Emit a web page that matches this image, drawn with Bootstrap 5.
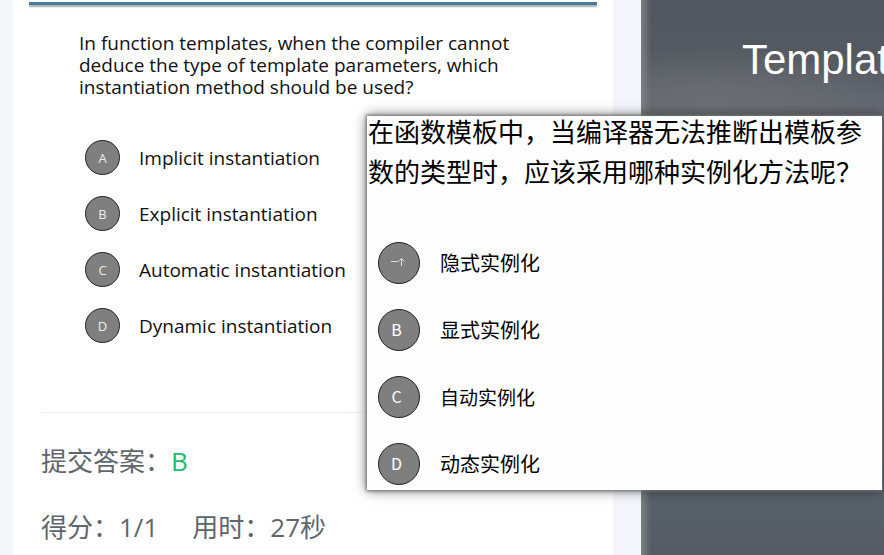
<!DOCTYPE html>
<html lang="zh-CN">
<head>
<meta charset="utf-8">
<meta name="viewport" content="width=device-width, initial-scale=1">
<title>Templates</title>
<link href="https://cdn.jsdelivr.net/npm/bootstrap@5.3.0/dist/css/bootstrap.min.css" rel="stylesheet">
<style>
body { background: #f5f6fb; font-family: "Open Sans", "Noto Sans CJK SC", sans-serif; color: #111; }
.review { flex: 1 1 0; min-width: 0; margin: 0 28px 0 13px; background: #fff; }
.slide-rule { height: 3px; margin: 2px 16px 0; background: #457b9d; box-shadow: 0 2px 2px #aaa; }
.slide-body { padding: 27px 66px 0; }
.question { font-size: 19px; line-height: 22px; max-width: 450px; margin-bottom: 42px; }
.choices { padding-left: 6px; gap: 21px; }
.choice { gap: 19px; font-size: 19px; line-height: 26px; color: #111; }
.choice-letter { width: 35px; height: 35px; font-size: 13px; color: #eee; background: #7f7f7f; border: 1px solid #222; border-radius: 50%; }
.result { margin: 69px 28px 0; padding-top: 28px; border-top: 1px solid #f0f1f4; font-size: 26px; line-height: 40px; color: #5f656d; gap: 26px; }
.result-answer { color: #19be6b; }
.result-row { column-gap: 34px; }
.stage { flex: 0 0 27.5%; min-width: 0; padding: 35px 0 0 101px;
  background: linear-gradient(90deg, #7c8083 0, transparent 10px), radial-gradient(ellipse 180px 75px at 30% 118px, #6d7175, transparent), linear-gradient(#52565e 0, #555a61 60px, #656971 110px, #59626a 490px, #545b65 555px); }
.stage-title { font-family: "Liberation Sans", sans-serif; font-size: 42px; line-height: 50px; color: #fff; }
.translation { top: 116px; left: 367px; right: 2px; background: #fefefe; box-shadow: 0 0 3px 1px #777, 0 0 12px rgba(0,0,0,.6); font-family: "Noto Sans CJK SC", sans-serif; color: #000; }
.translation-question { font-size: 26px; line-height: 40px; padding: 0 1px; margin: -5px 0 51px; }
.translation-choices { padding: 0 0 5px 11px; gap: 25px; }
.translation .choice { gap: 20px; font-size: 20px; line-height: 30px; color: #000; }
.translation .choice-compact { font-size: 19px; }
.translation .choice-letter { width: 42px; height: 42px; font-size: 16px; padding: 0 5px 2px 0; color: #fff; }
.choice-letter svg { width: 16px; height: 10px; margin-left: 2px; }
</style>
<script src="https://cdn.jsdelivr.net/npm/bootstrap@5.3.0/dist/js/bootstrap.bundle.min.js"></script>
</head>
<body>
<div class="d-flex min-vh-100 position-relative overflow-hidden">
  <main class="review d-flex flex-column">
    <div class="slide-rule"></div>
    <div class="slide-body">
      <p class="question">In function templates, when the compiler cannot deduce the type of template parameters, which instantiation method should be used?</p>
      <div class="choices d-flex flex-column align-items-start">
        <button type="button" class="choice btn border-0 p-0 d-flex align-items-center"><span class="choice-letter d-flex align-items-center justify-content-center">A</span>Implicit instantiation</button>
        <button type="button" class="choice btn border-0 p-0 d-flex align-items-center"><span class="choice-letter d-flex align-items-center justify-content-center">B</span>Explicit instantiation</button>
        <button type="button" class="choice btn border-0 p-0 d-flex align-items-center"><span class="choice-letter d-flex align-items-center justify-content-center">C</span>Automatic instantiation</button>
        <button type="button" class="choice btn border-0 p-0 d-flex align-items-center"><span class="choice-letter d-flex align-items-center justify-content-center">D</span>Dynamic instantiation</button>
      </div>
    </div>
    <div class="result d-flex flex-column">
      <div>提交答案：<span class="result-answer">B</span></div>
      <div class="result-row d-flex flex-wrap"><span>得分：1/1</span><span>用时：27秒</span></div>
    </div>
  </main>
  <aside class="stage overflow-hidden">
    <div class="stage-title text-nowrap">Templates</div>
  </aside>
  <section class="translation position-absolute">
    <p class="translation-question">在函数模板中，当编译器无法推断出模板参数的类型时，应该采用哪种实例化方法呢？</p>
    <div class="translation-choices d-flex flex-column align-items-start">
      <button type="button" class="choice btn border-0 p-0 d-flex align-items-center"><span class="choice-letter d-flex align-items-center justify-content-center"><svg viewBox="0 0 16 10" fill="none" stroke="#ddd" stroke-width="1" aria-label="A"><path d="M1 4.500H8M11.500 9V2M8.500 4.500L11.500 1.500L14.500 4.500"/></svg></span>隐式实例化</button>
      <button type="button" class="choice btn border-0 p-0 d-flex align-items-center"><span class="choice-letter d-flex align-items-center justify-content-center">B</span>显式实例化</button>
      <button type="button" class="choice choice-compact btn border-0 p-0 d-flex align-items-center"><span class="choice-letter d-flex align-items-center justify-content-center">C</span>自动实例化</button>
      <button type="button" class="choice btn border-0 p-0 d-flex align-items-center"><span class="choice-letter d-flex align-items-center justify-content-center">D</span>动态实例化</button>
    </div>
  </section>
</div>
</body>
</html>
